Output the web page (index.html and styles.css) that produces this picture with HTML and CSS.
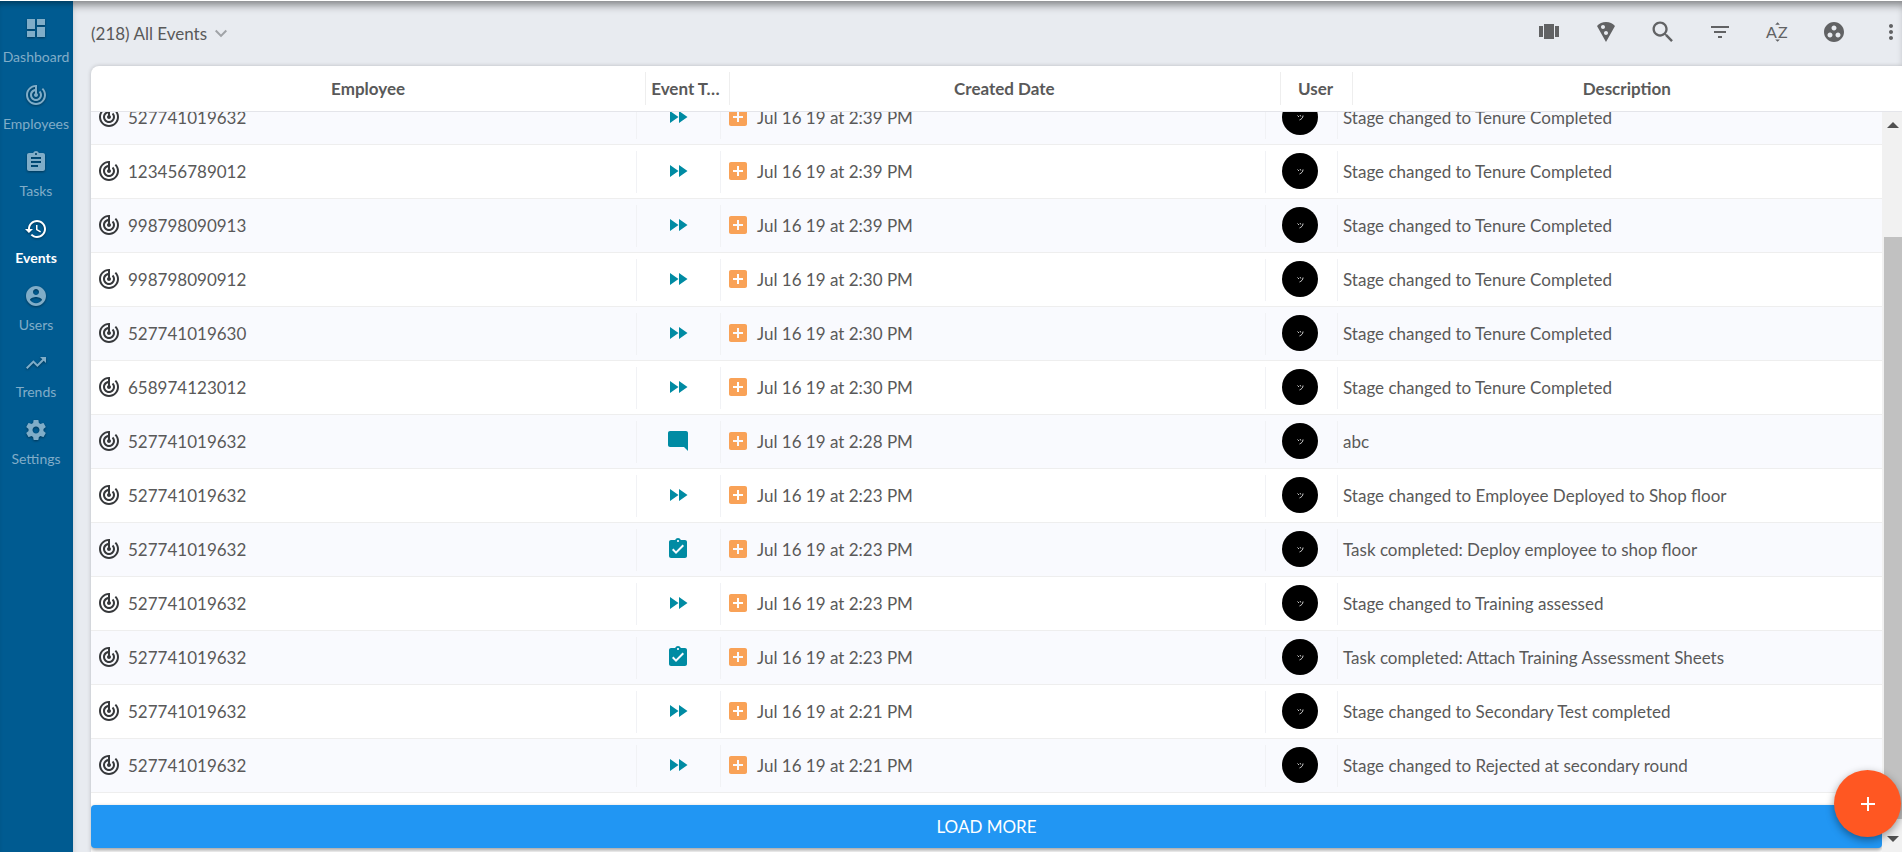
FILE: index.html
```html
<!DOCTYPE html>
<html lang="en">
<head>
<meta charset="utf-8">
<title>All Events</title>
<link rel="stylesheet" href="styles.css">
</head>
<body>
<svg class="sprite" aria-hidden="true">
<symbol id="dashboard" viewBox="0 0 24 24"><path d="M3 13h8V3H3v10zm0 8h8v-6H3v6zm10 0h8V11h-8v10zm0-18v6h8V3h-8z"/></symbol>
<symbol id="track" viewBox="0 0 24 24"><path d="M19.07 4.93l-1.41 1.41C19.1 7.79 20 9.79 20 12c0 4.42-3.58 8-8 8s-8-3.58-8-8c0-4.08 3.05-7.44 7-7.93v2.02C8.16 6.57 6 9.03 6 12c0 3.31 2.69 6 6 6s6-2.69 6-6c0-1.66-.67-3.16-1.76-4.24l-1.41 1.41C15.55 9.9 16 10.9 16 12c0 2.21-1.79 4-4 4s-4-1.79-4-4c0-1.86 1.28-3.41 3-3.86v2.14c-.6.35-1 .98-1 1.72 0 1.1.9 2 2 2s2-.9 2-2c0-.74-.4-1.38-1-1.72V2h-1C6.48 2 2 6.48 2 12s4.48 10 10 10 10-4.48 10-10c0-2.76-1.12-5.26-2.93-7.07z"/></symbol>
<symbol id="assignment" viewBox="0 0 24 24"><path d="M19 3h-4.18C14.4 1.84 13.3 1 12 1c-1.3 0-2.4.84-2.82 2H5c-1.1 0-2 .9-2 2v14c0 1.1.9 2 2 2h14c1.1 0 2-.9 2-2V5c0-1.1-.9-2-2-2zm-7 0c.55 0 1 .45 1 1s-.45 1-1 1-1-.45-1-1 .45-1 1-1zm2 14H7v-2h7v2zm3-4H7v-2h10v2zm0-4H7V7h10v2z"/></symbol>
<symbol id="history" viewBox="0 0 24 24"><path d="M13 3c-4.97 0-9 4.03-9 9H1l3.89 3.89.07.14L9 12H6c0-3.87 3.13-7 7-7s7 3.13 7 7-3.13 7-7 7c-1.93 0-3.68-.79-4.94-2.06l-1.42 1.42C8.27 19.99 10.51 21 13 21c4.97 0 9-4.03 9-9s-4.03-9-9-9zm-1 5v5l4.28 2.54.72-1.21-3.5-2.08V8H12z"/></symbol>
<symbol id="account" viewBox="0 0 24 24"><path d="M12 2C6.48 2 2 6.48 2 12s4.48 10 10 10 10-4.48 10-10S17.52 2 12 2zm0 3c1.66 0 3 1.34 3 3s-1.34 3-3 3-3-1.34-3-3 1.34-3 3-3zm0 14.2c-2.5 0-4.71-1.28-6-3.22.03-1.99 4-3.08 6-3.08 1.99 0 5.97 1.09 6 3.08-1.29 1.94-3.5 3.22-6 3.22z"/></symbol>
<symbol id="trending" viewBox="0 0 24 24"><path d="M16 6l2.29 2.29-4.88 4.88-4-4L2 16.59 3.41 18l6-6 4 4 6.3-6.29L22 12V6z"/></symbol>
<symbol id="settings" viewBox="0 0 24 24"><path d="M19.43 12.98c.04-.32.07-.64.07-.98s-.03-.66-.07-.98l2.11-1.65c.19-.15.24-.42.12-.64l-2-3.46c-.12-.22-.39-.3-.61-.22l-2.49 1c-.52-.4-1.08-.73-1.69-.98l-.38-2.65C14.46 2.18 14.25 2 14 2h-4c-.25 0-.46.18-.49.42l-.38 2.65c-.61.25-1.17.59-1.69.98l-2.49-1c-.23-.09-.49 0-.61.22l-2 3.46c-.13.22-.07.49.12.64l2.11 1.65c-.04.32-.07.65-.07.98s.03.66.07.98l-2.11 1.65c-.19.15-.24.42-.12.64l2 3.46c.12.22.39.3.61.22l2.49-1c.52.4 1.08.73 1.69.98l.38 2.65c.03.24.24.42.49.42h4c.25 0 .46-.18.49-.42l.38-2.65c.61-.25 1.17-.59 1.69-.98l2.49 1c.23.09.49 0 .61-.22l2-3.46c.12-.22.07-.49-.12-.64l-2.11-1.65zM12 15.5c-1.93 0-3.5-1.57-3.5-3.5s1.57-3.5 3.5-3.5 3.5 1.57 3.5 3.5-1.57 3.5-3.5 3.5z"/></symbol>
<symbol id="chevron" viewBox="0 0 24 24"><path d="M7.41 7.84L12 12.42l4.59-4.58L18 9.25l-6 6-6-6z"/></symbol>
<symbol id="carousel" viewBox="0 0 24 24"><path d="M7 19h10V4H7v15zm-5-2h4V6H2v11zM18 6v11h4V6h-4z"/></symbol>
<symbol id="pizza" viewBox="0 0 24 24"><path d="M12 2C8.43 2 5.23 3.54 3.01 6L12 22l8.99-16C18.78 3.55 15.57 2 12 2zM7 7c0-1.1.9-2 2-2s2 .9 2 2-.9 2-2 2-2-.9-2-2zm5 8c-1.1 0-2-.9-2-2s.9-2 2-2 2 .9 2 2-.89 2-2 2z"/></symbol>
<symbol id="search" viewBox="0 0 24 24"><path d="M15.5 14h-.79l-.28-.27C15.41 12.59 16 11.11 16 9.5 16 5.91 13.09 3 9.5 3S3 5.91 3 9.5 5.91 16 9.5 16c1.61 0 3.09-.59 4.23-1.57l.27.28v.79l5 4.99L20.49 19l-4.99-5zm-6 0C7.01 14 5 11.99 5 9.5S7.01 5 9.5 5 14 7.01 14 9.5 11.99 14 9.5 14z"/></symbol>
<symbol id="filter" viewBox="0 0 24 24"><path d="M10 18h4v-2h-4v2zM3 6v2h18V6H3zm3 7h12v-2H6v2z"/></symbol>
<symbol id="group" viewBox="0 0 24 24"><path d="M12 2C6.48 2 2 6.48 2 12s4.48 10 10 10 10-4.48 10-10S17.52 2 12 2zM8 17.5c-1.38 0-2.5-1.12-2.5-2.5s1.12-2.5 2.5-2.5 2.5 1.12 2.5 2.5-1.12 2.5-2.5 2.5zM9.5 8c0-1.38 1.12-2.5 2.5-2.5s2.5 1.12 2.5 2.5-1.12 2.5-2.5 2.5S9.5 9.38 9.5 8zm6.5 9.5c-1.38 0-2.5-1.12-2.5-2.5s1.12-2.5 2.5-2.5 2.5 1.12 2.5 2.5-1.12 2.5-2.5 2.5z"/></symbol>
<symbol id="more" viewBox="0 0 24 24"><path d="M12 8c1.1 0 2-.9 2-2s-.9-2-2-2-2 .9-2 2 .9 2 2 2zm0 2c-1.1 0-2 .9-2 2s.9 2 2 2 2-.9 2-2-.9-2-2-2zm0 6c-1.1 0-2 .9-2 2s.9 2 2 2 2-.9 2-2-.9-2-2-2z"/></symbol>
<symbol id="forward" viewBox="0 0 24 24"><path d="M4 18l8.5-6L4 6v12zm9-12v12l8.5-6L13 6z"/></symbol>
<symbol id="comment" viewBox="0 0 24 24"><path d="M21.99 4c0-1.1-.89-2-1.99-2H4c-1.1 0-2 .9-2 2v12c0 1.1.9 2 2 2h14l4 4-.01-18z"/></symbol>
<symbol id="done" viewBox="0 0 24 24"><path d="M19 3h-4.18C14.4 1.84 13.3 1 12 1c-1.3 0-2.4.84-2.82 2H5c-1.1 0-2 .9-2 2v14c0 1.1.9 2 2 2h14c1.1 0 2-.9 2-2V5c0-1.1-.9-2-2-2zm-7 0c.55 0 1 .45 1 1s-.45 1-1 1-1-.45-1-1 .45-1 1-1zm-2 14l-4-4 1.41-1.41L10 14.17l6.59-6.59L18 9l-8 8z"/></symbol>
<symbol id="addbox" viewBox="0 0 24 24"><path d="M19 3H5c-1.11 0-2 .9-2 2v14c0 1.1.89 2 2 2h14c1.1 0 2-.9 2-2V5c0-1.1-.9-2-2-2zm-2 10h-4v4h-2v-4H7v-2h4V7h2v4h4v2z"/></symbol>
<symbol id="plus" viewBox="0 0 24 24"><path d="M19 13h-6v6h-2v-6H5v-2h6V5h2v6h6v2z"/></symbol>
<symbol id="avatar" viewBox="0 0 36 36"><circle cx="18" cy="18" r="18"/><path class="avatar-mark" d="M15.500 16.500l1.500 1.500M18 16l.8 1.500M21 16.500c0 2.500-1.500 3.500-3.500 4.500"/></symbol>
</svg>
<div class="app">
  <nav class="sidebar">
    <a class="nav-item" href="#"><svg class="icon"><use href="#dashboard"/></svg><span>Dashboard</span></a>
    <a class="nav-item" href="#"><svg class="icon"><use href="#track"/></svg><span>Employees</span></a>
    <a class="nav-item" href="#"><svg class="icon"><use href="#assignment"/></svg><span>Tasks</span></a>
    <a class="nav-item active" href="#" aria-current="page"><svg class="icon"><use href="#history"/></svg><span>Events</span></a>
    <a class="nav-item" href="#"><svg class="icon"><use href="#account"/></svg><span>Users</span></a>
    <a class="nav-item" href="#"><svg class="icon"><use href="#trending"/></svg><span>Trends</span></a>
    <a class="nav-item" href="#"><svg class="icon"><use href="#settings"/></svg><span>Settings</span></a>
  </nav>
  <main class="main">
    <header class="toolbar">
      <button class="view-picker" type="button">(218) All Events<svg class="chevron"><use href="#chevron"/></svg></button>
      <div class="tools">
        <button class="tool" type="button" aria-label="Columns"><svg class="icon"><use href="#carousel"/></svg></button>
        <button class="tool" type="button" aria-label="Segments"><svg class="icon"><use href="#pizza"/></svg></button>
        <button class="tool" type="button" aria-label="Search"><svg class="icon large"><use href="#search"/></svg></button>
        <button class="tool" type="button" aria-label="Filter"><svg class="icon"><use href="#filter"/></svg></button>
        <button class="tool" type="button" aria-label="Sort"><svg class="icon" viewBox="0 0 24 24"><path d="M14.9 4.7h-4.7l2.4-2.4zM10.2 19.4h4.7l-2.3 2.3z"/><text class="alpha-letter" x="1" y="18">A</text><text class="alpha-letter" x="13" y="18">Z</text></svg></button>
        <button class="tool" type="button" aria-label="Group"><svg class="icon"><use href="#group"/></svg></button>
        <button class="tool" type="button" aria-label="More"><svg class="icon"><use href="#more"/></svg></button>
      </div>
    </header>
    <section class="card">
      <table class="grid head">
        <colgroup><col class="col-employee"><col class="col-type"><col><col class="col-user"><col></colgroup>
        <thead><tr><th>Employee</th><th>Event Type</th><th>Created Date</th><th>User</th><th>Description</th></tr></thead>
      </table>
      <div class="body">
        <div class="list">
          <table class="grid rows">
            <colgroup><col><col class="col-type"><col><col class="col-user"><col></colgroup>
            <tbody>
            <tr><td><div class="cell"><svg class="icon"><use href="#track"/></svg>527741019632</div></td><td><div class="cell type"><svg class="icon"><use href="#forward"/></svg></div></td><td><div class="cell date"><svg class="icon"><use href="#addbox"/></svg>Jul 16 19 at 2:39 PM</div></td><td><svg class="avatar"><use href="#avatar"/></svg></td><td>Stage changed to Tenure Completed</td></tr>
            <tr><td><div class="cell"><svg class="icon"><use href="#track"/></svg>123456789012</div></td><td><div class="cell type"><svg class="icon"><use href="#forward"/></svg></div></td><td><div class="cell date"><svg class="icon"><use href="#addbox"/></svg>Jul 16 19 at 2:39 PM</div></td><td><svg class="avatar"><use href="#avatar"/></svg></td><td>Stage changed to Tenure Completed</td></tr>
            <tr><td><div class="cell"><svg class="icon"><use href="#track"/></svg>998798090913</div></td><td><div class="cell type"><svg class="icon"><use href="#forward"/></svg></div></td><td><div class="cell date"><svg class="icon"><use href="#addbox"/></svg>Jul 16 19 at 2:39 PM</div></td><td><svg class="avatar"><use href="#avatar"/></svg></td><td>Stage changed to Tenure Completed</td></tr>
            <tr><td><div class="cell"><svg class="icon"><use href="#track"/></svg>998798090912</div></td><td><div class="cell type"><svg class="icon"><use href="#forward"/></svg></div></td><td><div class="cell date"><svg class="icon"><use href="#addbox"/></svg>Jul 16 19 at 2:30 PM</div></td><td><svg class="avatar"><use href="#avatar"/></svg></td><td>Stage changed to Tenure Completed</td></tr>
            <tr><td><div class="cell"><svg class="icon"><use href="#track"/></svg>527741019630</div></td><td><div class="cell type"><svg class="icon"><use href="#forward"/></svg></div></td><td><div class="cell date"><svg class="icon"><use href="#addbox"/></svg>Jul 16 19 at 2:30 PM</div></td><td><svg class="avatar"><use href="#avatar"/></svg></td><td>Stage changed to Tenure Completed</td></tr>
            <tr><td><div class="cell"><svg class="icon"><use href="#track"/></svg>658974123012</div></td><td><div class="cell type"><svg class="icon"><use href="#forward"/></svg></div></td><td><div class="cell date"><svg class="icon"><use href="#addbox"/></svg>Jul 16 19 at 2:30 PM</div></td><td><svg class="avatar"><use href="#avatar"/></svg></td><td>Stage changed to Tenure Completed</td></tr>
            <tr><td><div class="cell"><svg class="icon"><use href="#track"/></svg>527741019632</div></td><td><div class="cell type"><svg class="icon"><use href="#comment"/></svg></div></td><td><div class="cell date"><svg class="icon"><use href="#addbox"/></svg>Jul 16 19 at 2:28 PM</div></td><td><svg class="avatar"><use href="#avatar"/></svg></td><td>abc</td></tr>
            <tr><td><div class="cell"><svg class="icon"><use href="#track"/></svg>527741019632</div></td><td><div class="cell type"><svg class="icon"><use href="#forward"/></svg></div></td><td><div class="cell date"><svg class="icon"><use href="#addbox"/></svg>Jul 16 19 at 2:23 PM</div></td><td><svg class="avatar"><use href="#avatar"/></svg></td><td>Stage changed to Employee Deployed to Shop floor</td></tr>
            <tr><td><div class="cell"><svg class="icon"><use href="#track"/></svg>527741019632</div></td><td><div class="cell type"><svg class="icon"><use href="#done"/></svg></div></td><td><div class="cell date"><svg class="icon"><use href="#addbox"/></svg>Jul 16 19 at 2:23 PM</div></td><td><svg class="avatar"><use href="#avatar"/></svg></td><td>Task completed: Deploy employee to shop floor</td></tr>
            <tr><td><div class="cell"><svg class="icon"><use href="#track"/></svg>527741019632</div></td><td><div class="cell type"><svg class="icon"><use href="#forward"/></svg></div></td><td><div class="cell date"><svg class="icon"><use href="#addbox"/></svg>Jul 16 19 at 2:23 PM</div></td><td><svg class="avatar"><use href="#avatar"/></svg></td><td>Stage changed to Training assessed</td></tr>
            <tr><td><div class="cell"><svg class="icon"><use href="#track"/></svg>527741019632</div></td><td><div class="cell type"><svg class="icon"><use href="#done"/></svg></div></td><td><div class="cell date"><svg class="icon"><use href="#addbox"/></svg>Jul 16 19 at 2:23 PM</div></td><td><svg class="avatar"><use href="#avatar"/></svg></td><td>Task completed: Attach Training Assessment Sheets</td></tr>
            <tr><td><div class="cell"><svg class="icon"><use href="#track"/></svg>527741019632</div></td><td><div class="cell type"><svg class="icon"><use href="#forward"/></svg></div></td><td><div class="cell date"><svg class="icon"><use href="#addbox"/></svg>Jul 16 19 at 2:21 PM</div></td><td><svg class="avatar"><use href="#avatar"/></svg></td><td>Stage changed to Secondary Test completed</td></tr>
            <tr><td><div class="cell"><svg class="icon"><use href="#track"/></svg>527741019632</div></td><td><div class="cell type"><svg class="icon"><use href="#forward"/></svg></div></td><td><div class="cell date"><svg class="icon"><use href="#addbox"/></svg>Jul 16 19 at 2:21 PM</div></td><td><svg class="avatar"><use href="#avatar"/></svg></td><td>Stage changed to Rejected at secondary round</td></tr>
            </tbody>
          </table>
          <button class="load-more" type="button">LOAD MORE</button>
        </div>
        <div class="scrollbar" aria-hidden="true"><span class="arrow up"></span><span class="thumb"></span><span class="arrow down"></span></div>
      </div>
    </section>
  </main>
</div>
<button class="fab" type="button" aria-label="Add"><svg class="icon"><use href="#plus"/></svg></button>
</body>
</html>
```

FILE: styles.css
```css
* { box-sizing: border-box; }
body {
  margin: 0;
  font-family: Lato, "Liberation Sans", sans-serif;
  font-size: 17px;
  color: #595959;
  background: #e8ebf0;
}
button {
  margin: 0;
  padding: 0;
  border: 0;
  background: none;
  color: inherit;
  font: inherit;
  cursor: pointer;
}
.sprite { position: absolute; width: 0; height: 0; }
.icon { display: block; flex: none; width: 24px; height: 24px; fill: currentColor; }
.icon.large { width: 28px; height: 28px; }
.app {
  display: flex;
  height: 100vh;
  overflow: hidden;
  border-top: 1px solid #fff;
}

.sidebar {
  flex: none;
  width: 73px;
  padding: 15px 1px 0 0;
  background: #005b91;
  box-shadow: inset 0 6px 6px -4px rgba(0, 0, 0, .4);
}
.nav-item {
  display: flex;
  flex-direction: column;
  align-items: center;
  gap: 7px;
  height: 67px;
  color: #80adc8;
  font-size: 14px;
  line-height: 20px;
  text-decoration: none;
}
.nav-item .icon { filter: drop-shadow(0 1px 1px rgba(0, 0, 0, .4)); }
.nav-item.active { color: #fff; font-weight: 700; }

.main {
  flex: 1;
  min-width: 0;
  display: flex;
  flex-direction: column;
  padding-left: 18px;
  box-shadow: inset 0 8px 8px -4px rgba(0, 0, 0, .45);
}
.toolbar {
  flex: none;
  display: flex;
  justify-content: space-between;
  align-items: center;
  height: 65px;
  padding-bottom: 3px;
}
.view-picker { display: flex; align-items: center; gap: 2px; padding-top: 4px; line-height: 24px; }
.chevron { width: 24px; height: 24px; fill: #a0a3a7; }
.tools { display: flex; gap: 17px; margin-right: -9px; color: #616264; }
.tool { display: grid; place-items: center; width: 40px; height: 40px; }
.alpha-letter { font-family: Lato, sans-serif; font-size: 16px; }

.card {
  flex: 1;
  min-height: 0;
  display: flex;
  flex-direction: column;
  background: #fff;
  border-top-left-radius: 8px;
  box-shadow: 0 0 4px rgba(0, 0, 0, .2);
  overflow: hidden;
}
.grid { width: 100%; table-layout: fixed; border-collapse: separate; border-spacing: 0; }
.col-employee { width: 30.6%; }
.col-type { width: 84px; }
.col-user { width: 72px; }
.head { flex: none; border-bottom: 1px solid #e4e5ea; }
.head th {
  height: 45px;
  padding: 0 6px;
  font-size: 17px;
  font-weight: 700;
  overflow: hidden;
  white-space: nowrap;
  text-overflow: ellipsis;
  background: linear-gradient(#eee, #eee) 0 6px / 1px 33px no-repeat;
}
.head th:first-child { background: none; }

.body { flex: 1; min-height: 0; display: flex; overflow: hidden; }
.list {
  flex: 1;
  min-width: 0;
  display: flex;
  flex-direction: column;
  justify-content: flex-end;
  padding-bottom: 4px;
}
.rows { flex: none; margin-bottom: 12px; }
.rows tr:nth-child(odd) { background-color: #f9fafe; }
.rows td {
  height: 54px;
  padding: 0 6px 1px;
  border-bottom: 1px solid #eee;
  background: linear-gradient(#f1f2f5, #f1f2f5) 0 6px / 1px 42px no-repeat;
}
.rows td:first-child { background: none; }
.rows td:nth-child(4) { padding: 0 17px 1px; }
.cell { display: flex; align-items: center; gap: 7px; }
.cell .icon { color: #36383b; }
.cell.type { justify-content: center; }
.cell.type .icon { color: #008ba3; }
.cell.date .icon { color: #f9a257; }
.avatar { display: block; width: 36px; height: 36px; }
.avatar-mark { fill: none; stroke: #ccc; stroke-width: 1; }
.load-more {
  flex: none;
  height: 43px;
  border-radius: 4px;
  background: #2196f3;
  color: #fff;
  box-shadow: 0 2px 4px rgba(0, 0, 0, .4);
}
.scrollbar {
  flex: none;
  display: flex;
  flex-direction: column;
  align-items: center;
  width: 20px;
  padding: 10px 0 10px 2px;
  background: #f1f1f1;
}
.arrow { border: 6px solid transparent; }
.arrow.up { border-top: 0; border-bottom-color: #505050; }
.arrow.down { border-bottom: 0; border-top-color: #505050; }
.thumb { flex: 1; align-self: stretch; margin: 109px 0 17px; background: #c1c1c1; }
.fab {
  position: fixed;
  right: 1px;
  bottom: 15px;
  display: grid;
  place-items: center;
  width: 67px;
  height: 67px;
  border-radius: 50%;
  background: #ff5722;
  color: #fff;
  box-shadow: 0 3px 8px rgba(0, 0, 0, .4);
}
```
